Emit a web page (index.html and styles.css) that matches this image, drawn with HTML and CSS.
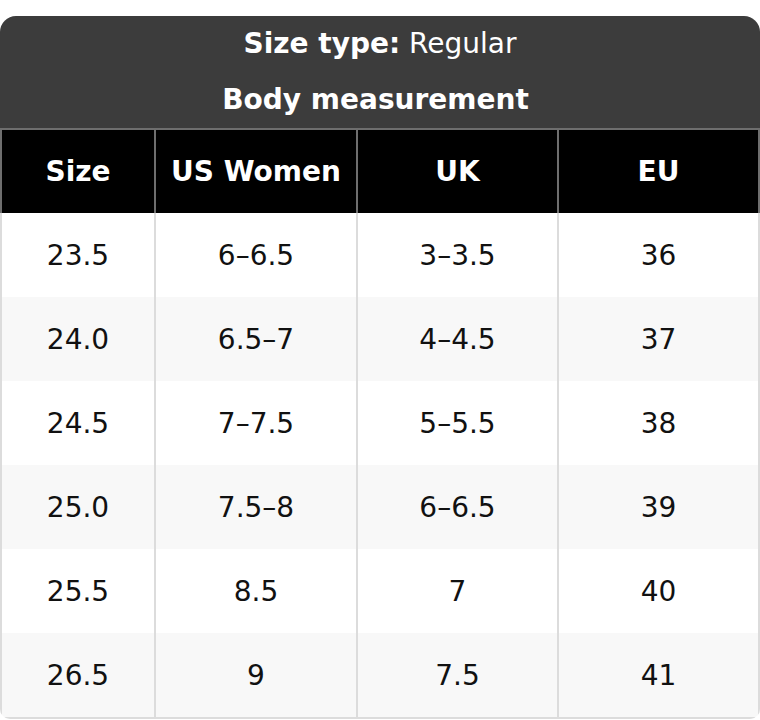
FILE: index.html
```html
<!DOCTYPE html>
<html lang="en">
<head>
<meta charset="utf-8">
<title>Size chart</title>
<link rel="stylesheet" href="styles.css">
</head>
<body>
<div class="card">
  <div class="title">
    <div class="title-line"><strong>Size type:</strong> Regular</div>
    <div class="title-line title-sub"><strong>Body measurement</strong></div>
  </div>
  <table class="chart">
    <colgroup>
      <col class="c1"><col class="c2"><col class="c3"><col class="c4">
    </colgroup>
    <thead>
      <tr><th>Size</th><th>US Women</th><th>UK</th><th>EU</th></tr>
    </thead>
    <tbody>
      <tr><td>23.5</td><td>6–6.5</td><td>3–3.5</td><td>36</td></tr>
      <tr><td>24.0</td><td>6.5–7</td><td>4–4.5</td><td>37</td></tr>
      <tr><td>24.5</td><td>7–7.5</td><td>5–5.5</td><td>38</td></tr>
      <tr><td>25.0</td><td>7.5–8</td><td>6–6.5</td><td>39</td></tr>
      <tr><td>25.5</td><td>8.5</td><td>7</td><td>40</td></tr>
      <tr><td>26.5</td><td>9</td><td>7.5</td><td>41</td></tr>
    </tbody>
  </table>
</div>
</body>
</html>
```

FILE: styles.css
```css
html, body {
  margin: 0;
  padding: 0;
  background: #fff;
}
body {
  padding-top: 16px;
  font-family: "DejaVu Sans", Verdana, sans-serif;
  font-size: 28px;
}
.card {
  width: 760px;
  border-radius: 16px 16px 10px 10px;
  overflow: hidden;
}
.title {
  background: #3c3c3c;
  color: #fff;
  text-align: center;
  padding: 7px 0 7px;
  display: flex;
  flex-direction: column;
  gap: 14px;
}
.title-line {
  line-height: 42px;
  height: 42px;
}
.title-sub {
  padding-right: 9px;
}
.chart {
  width: 760px;
  border-collapse: separate;
  border-spacing: 0;
  table-layout: fixed;
}
.c1 { width: 156px; }
.c2 { width: 202px; }
.c3 { width: 201px; }
.c4 { width: 201px; }
.chart th,
.chart td {
  text-align: center;
  padding: 0;
  line-height: 42px;
}
.chart th {
  background: #000;
  color: #fff;
  font-weight: bold;
  height: 83px;
  border-top: 2px solid #6e6e6e;
  border-right: 2px solid #6e6e6e;
}
.chart th:first-child {
  border-left: 2px solid #6e6e6e;
}
.chart td {
  color: #111;
  height: 82px;
  padding-top: 2px;
  border-right: 2px solid #dcdcdc;
  background: #fff;
}
.chart td:first-child {
  border-left: 2px solid #dcdcdc;
}
.chart tbody tr:nth-child(even) td {
  background: #f8f8f8;
}
.chart tbody tr:last-child td {
  border-bottom: 2px solid #dcdcdc;
}
```
